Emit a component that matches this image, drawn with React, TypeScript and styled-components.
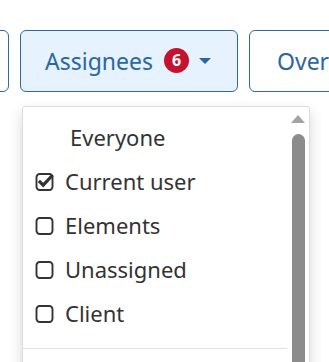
import { createGlobalStyle, styled } from "styled-components";

const GlobalStyle = createGlobalStyle`
  html, body {
    margin: 0;
    padding: 0;
    background: #ffffff;
    overflow: hidden;
  }
  body {
    font-family: "Noto Sans", "Open Sans", sans-serif;
  }
`;

interface Option {
  label: string;
  checked?: boolean;
  plain?: boolean;
}

const options: Option[] = [
  { label: "Everyone", plain: true },
  { label: "Current user", checked: true },
  { label: "Elements" },
  { label: "Unassigned" },
  { label: "Client" },
];

function BoxIcon({ checked }: { checked?: boolean }) {
  return (
    <svg width="19" height="19" viewBox="0 0 19 19">
      <rect
        x="1.5"
        y="2"
        width="16"
        height="16"
        rx="3.2"
        fill="none"
        stroke="#333"
        strokeWidth="1.9"
      />
      {checked && (
        <path
          d="M5 10 L8.2 13.2 L16.6 4.2"
          fill="none"
          stroke="#333"
          strokeWidth="3.2"
          strokeLinecap="square"
        />
      )}
    </svg>
  );
}

export default function App() {
  return (
    <>
      <GlobalStyle />
      <Page>
        <Toolbar>
          <FilterButton $width={100} />
          <Wrap>
            <FilterButton $active $width={218}>
              <span>Assignees</span>
              <Badge>6</Badge>
              <Caret />
            </FilterButton>
            <Menu>
              <List>
                {options.map((o) => (
                  <Item key={o.label} $plain={o.plain}>
                    {!o.plain && <BoxIcon checked={o.checked} />}
                    <span>{o.label}</span>
                  </Item>
                ))}
                <Divider />
              </List>
              <ScrollBar>
                <Arrow />
                <Thumb />
              </ScrollBar>
            </Menu>
          </Wrap>
          <FilterButton $width={140} $pad={27}>
            <span>Overview</span>
          </FilterButton>
        </Toolbar>
      </Page>
    </>
  );
}

const Page = styled.div`
  width: 329px;
  height: 362px;
  overflow: hidden;
  padding-top: 30px;
  box-sizing: border-box;
`;

const Toolbar = styled.div`
  display: flex;
  gap: 11px;
  margin-left: -91px;
`;

const Wrap = styled.div`
  position: relative;
  flex-shrink: 0;
`;

const FilterButton = styled.button<{
  $active?: boolean;
  $width: number;
  $pad?: number;
}>`
  flex-shrink: 0;
  width: ${(p) => p.$width}px;
  height: 62px;
  box-sizing: border-box;
  display: flex;
  align-items: center;
  gap: 11px;
  padding: 0 0 0 ${(p) => p.$pad ?? 24}px;
  border: 1.5px solid #3069a0;
  border-radius: 6px;
  background: ${(p) => (p.$active ? "#e6f2fd" : "#ffffff")};
  color: #2c66a0;
  font-family: "Noto Sans", "Open Sans", sans-serif;
  font-size: 23px;
  white-space: nowrap;
  overflow: hidden;
`;

const Badge = styled.span`
  width: 25px;
  height: 25px;
  border-radius: 50%;
  background: #c4122f;
  color: #ffffff;
  font-size: 16px;
  font-weight: 700;
  display: flex;
  align-items: center;
  justify-content: center;
  margin-top: -2px;
`;

const Caret = styled.span`
  width: 0;
  height: 0;
  border-left: 6px solid transparent;
  border-right: 6px solid transparent;
  border-top: 6px solid #2c66a0;
  margin-left: -1px;
`;

const Menu = styled.div`
  position: absolute;
  top: 76px;
  left: 2px;
  width: 288px;
  height: 300px;
  box-sizing: border-box;
  display: flex;
  background: #ffffff;
  border: 1px solid #dcdcdc;
  border-radius: 3px;
  box-shadow: 0 6px 14px rgba(0, 0, 0, 0.16);
`;

const List = styled.div`
  flex: 1;
  padding-top: 8px;
`;

const Item = styled.div<{ $plain?: boolean }>`
  height: 44px;
  display: flex;
  align-items: center;
  gap: 11px;
  padding-left: ${(p) => (p.$plain ? "47px" : "12px")};
  color: #333333;
  font-size: 22px;
`;

const Divider = styled.div`
  margin-top: 13px;
  height: 1px;
  background: #e2e2e2;
`;

const ScrollBar = styled.div`
  width: 22px;
  display: flex;
  flex-direction: column;
  align-items: center;
  padding-top: 8px;
  box-sizing: border-box;
`;

const Arrow = styled.div`
  width: 0;
  height: 0;
  border-left: 7.5px solid transparent;
  border-right: 7.5px solid transparent;
  border-bottom: 8px solid #a3a3a3;
`;

const Thumb = styled.div`
  margin-top: 11px;
  width: 13px;
  flex: 1;
  background: #8c8c8c;
  border-radius: 7px 7px 0 0;
`;
